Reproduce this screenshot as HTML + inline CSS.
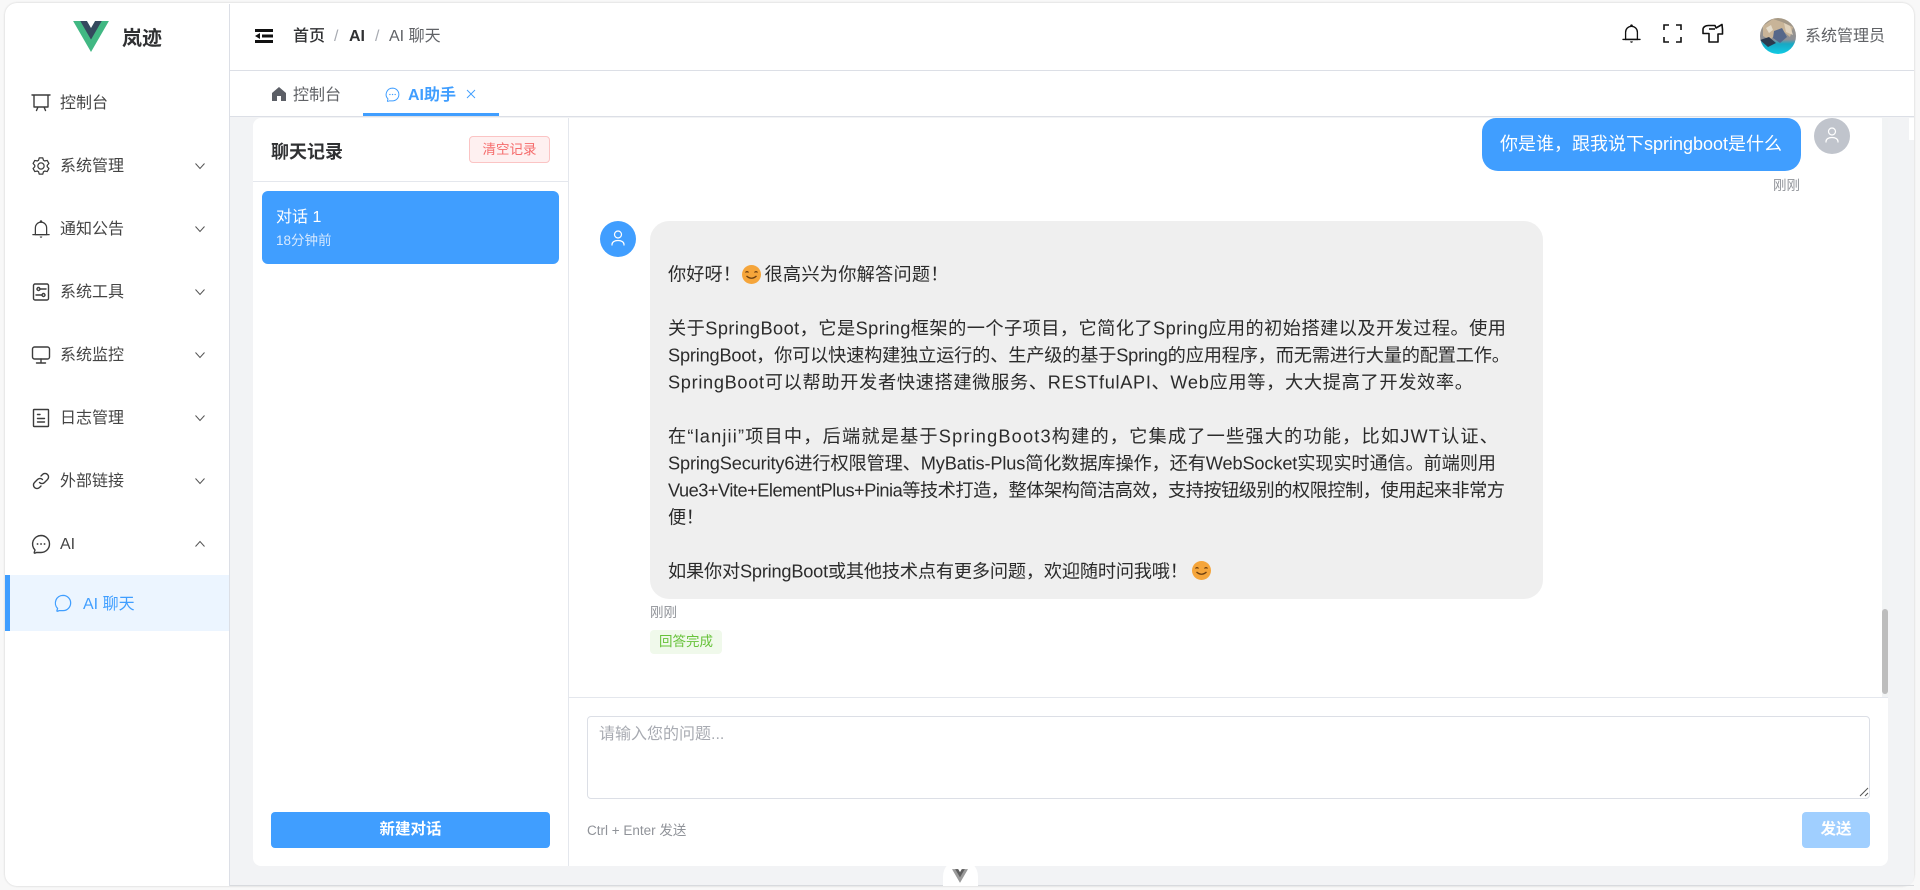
<!DOCTYPE html>
<html lang="zh-CN">
<head>
<meta charset="utf-8">
<title>AI 聊天</title>
<style>
*{box-sizing:border-box;margin:0;padding:0}
html,body{width:1920px;height:890px;overflow:hidden;background:#f8f8f8;font-family:"Liberation Sans","Noto Sans CJK SC",sans-serif;color:#303133}
#w{position:absolute;left:0;top:0;width:1920px;height:890px;filter:blur(.35px)}
.a{position:absolute}
.t{position:absolute;white-space:nowrap;line-height:20px;height:20px;margin-top:-10px}
svg{position:absolute;display:block;overflow:visible}
.m{font-size:16px;left:60px;color:#444}
.ic{width:20px;height:20px;left:31px;fill:none;stroke:#3c3c3c;stroke-width:1.4;stroke-linecap:round;stroke-linejoin:round}
.ch{width:12px;height:12px;left:194px;fill:none;stroke:#555;stroke-width:1}
</style>
</head>
<body>
<div id="w">
<div class="a" style="left:5px;top:3px;width:1909px;height:883px;background:#fff;border-radius:12px;box-shadow:0 0 2px rgba(0,0,0,.18);overflow:hidden"></div>

<!-- content background -->
<div class="a" style="left:230px;top:116px;width:1684px;height:770px;background:#f2f3f5;border-radius:0 0 10px 0"></div>
<div class="a" style="left:1909px;top:118px;width:5px;height:22px;background:#fff"></div>

<!-- sidebar -->
<div class="a" style="left:229px;top:4px;width:1px;height:882px;background:#dcdfe6"></div>
<svg style="left:73px;top:21px;width:36px;height:31px" viewBox="0 0 261.76 226.69"><path fill="#41b883" d="M161.096.001l-30.225 52.351L100.647.001H-.005l130.877 226.688L261.749.001z"/><path fill="#34495e" d="M161.096.001l-30.225 52.351L100.647.001H52.346l78.526 136.01L209.398.001z"/></svg>
<div class="t" style="left:122px;top:39px;font-size:20px;font-weight:700;color:#303133">岚迹</div>

<svg class="ic" style="top:92px" viewBox="0 0 20 20"><path d="M1 3h18M3 3v12h14V3M7 15l-1.500 3.500M13 15l1.500 3.500"/></svg>
<div class="t m" style="top:104px">控制台</div>

<svg class="ic" style="top:156px;stroke:none;fill:#3c3c3c" viewBox="0 0 1024 1024"><path d="M600.704 64a32 32 0 0 1 30.464 22.208l35.2 109.376c14.784 7.232 28.928 15.36 42.432 24.512l112.384-24.192a32 32 0 0 1 34.432 15.36L944.32 364.8a32 32 0 0 1-4.032 37.504l-77.12 85.12a357.12 357.12 0 0 1 0 49.024l77.12 85.248a32 32 0 0 1 4.032 37.504l-88.704 153.6a32 32 0 0 1-34.432 15.296L708.8 803.904c-13.44 9.088-27.648 17.28-42.368 24.512l-35.264 109.376A32 32 0 0 1 600.704 960H423.296a32 32 0 0 1-30.464-22.208L357.696 828.48a351.616 351.616 0 0 1-42.56-24.64l-112.32 24.256a32 32 0 0 1-34.432-15.36L79.68 659.2a32 32 0 0 1 4.032-37.504l77.12-85.248a357.12 357.12 0 0 1 0-48.896l-77.12-85.248A32 32 0 0 1 79.68 364.8l88.704-153.6a32 32 0 0 1 34.432-15.296l112.32 24.256c13.568-9.152 27.776-17.408 42.56-24.64l35.2-109.312A32 32 0 0 1 423.232 64H600.64zm-23.424 64H446.72l-36.352 113.088-24.512 11.968a294.113 294.113 0 0 0-34.816 20.096l-22.656 15.36-116.224-25.088-65.28 113.152 79.68 88.192-1.92 27.136a293.12 293.12 0 0 0 0 40.192l1.92 27.136-79.808 88.192 65.344 113.152 116.224-25.024 22.656 15.296a294.113 294.113 0 0 0 34.816 20.096l24.512 11.968L446.72 896h130.688l36.48-113.152 24.448-11.904a288.282 288.282 0 0 0 34.752-20.096l22.592-15.296 116.288 25.024 65.28-113.152-79.744-88.192 1.92-27.136a293.12 293.12 0 0 0 0-40.256l-1.92-27.136 79.808-88.128-65.344-113.152-116.288 24.96-22.592-15.232a287.616 287.616 0 0 0-34.752-20.096l-24.448-11.904L577.344 128zM512 320a192 192 0 1 1 0 384 192 192 0 0 1 0-384zm0 64a128 128 0 1 0 0 256 128 128 0 0 0 0-256z"/></svg>
<div class="t m" style="top:167px">系统管理</div>
<svg class="ch" style="top:160px" viewBox="0 0 12 12"><path d="M1.500 3.500l4.500 5 4.500-5"/></svg>

<svg class="ic" style="top:219px;stroke:none;fill:#3c3c3c" viewBox="0 0 1024 1024"><path d="M512 64a64 64 0 0 1 64 64v64H448v-64a64 64 0 0 1 64-64z"/><path d="M256 768h512V448a256 256 0 1 0-512 0v320zm256-640a320 320 0 0 1 320 320v384H192V448a320 320 0 0 1 320-320z"/><path d="M96 768h832q32 0 32 32t-32 32H96q-32 0-32-32t32-32zm352 128h128a64 64 0 0 1-128 0z"/></svg>
<div class="t m" style="top:230px">通知公告</div>
<svg class="ch" style="top:223px" viewBox="0 0 12 12"><path d="M1.500 3.500l4.500 5 4.500-5"/></svg>

<svg class="ic" style="top:282px" viewBox="0 0 20 20"><rect x="2.500" y="2" width="15" height="16" rx="1.500"/><circle cx="7.500" cy="7" r="1.500"/><path d="M9 7h6M5 13h6"/><circle cx="12.500" cy="13" r="1.500"/></svg>
<div class="t m" style="top:293px">系统工具</div>
<svg class="ch" style="top:286px" viewBox="0 0 12 12"><path d="M1.500 3.500l4.500 5 4.500-5"/></svg>

<svg class="ic" style="top:345px" viewBox="0 0 20 20"><rect x="1.500" y="2" width="17" height="12" rx="2"/><path d="M10 14v4M5.500 18h9"/></svg>
<div class="t m" style="top:356px">系统监控</div>
<svg class="ch" style="top:349px" viewBox="0 0 12 12"><path d="M1.500 3.500l4.500 5 4.500-5"/></svg>

<svg class="ic" style="top:408px" viewBox="0 0 20 20"><rect x="2.500" y="1.500" width="15" height="17" rx=".5"/><path d="M6.500 6.500h2.500M6.500 10.500h7M6.500 14h7"/></svg>
<div class="t m" style="top:419px">日志管理</div>
<svg class="ch" style="top:412px" viewBox="0 0 12 12"><path d="M1.500 3.500l4.500 5 4.500-5"/></svg>

<svg class="ic" style="top:471px" viewBox="0 0 20 20"><path d="M8.500 11.500a3.500 3.500 0 0 0 5 0l3-3a3.500 3.500 0 0 0-5-5L10 5"/><path d="M11.500 8.500a3.500 3.500 0 0 0-5 0l-3 3a3.500 3.500 0 0 0 5 5L10 15"/></svg>
<div class="t m" style="top:482px">外部链接</div>
<svg class="ch" style="top:475px" viewBox="0 0 12 12"><path d="M1.500 3.500l4.500 5 4.500-5"/></svg>

<svg class="ic" style="top:534px" viewBox="0 0 20 20"><path d="M10 1.500a8.500 8.500 0 0 1 0 17H5.500c-1.800 1-2.500.8-2.200-.2l.7-2.300A8.500 8.500 0 0 1 10 1.500z"/><path d="M6.500 10h.1M10 10h.1M13.500 10h.1" stroke-width="1.800"/></svg>
<div class="t m" style="top:545px">AI</div>
<svg class="ch" style="top:538px" viewBox="0 0 12 12"><path d="M1.500 8.500l4.500-5 4.500 5"/></svg>

<div class="a" style="left:5px;top:575px;width:224px;height:56px;background:#ecf5ff"></div>
<div class="a" style="left:5px;top:575px;width:5px;height:56px;background:#409eff"></div>
<svg style="left:54px;top:594px;width:18px;height:18px;fill:none;stroke:#409eff;stroke-width:1.400;stroke-linejoin:round" viewBox="0 0 20 20"><path d="M10 1.500a8.500 8.500 0 0 1 0 17H5.500c-1.800 1-2.500.8-2.200-.2l.7-2.300A8.500 8.500 0 0 1 10 1.500z"/></svg>
<div class="t" style="left:83px;top:604.500px;font-size:16px;color:#409eff">AI 聊天</div>

<!-- header -->
<div class="a" style="left:230px;top:70px;width:1684px;height:1px;background:#dcdfe6"></div>
<div class="a" style="left:230px;top:116px;width:1684px;height:1px;background:#dcdfe6"></div>
<svg style="left:255px;top:29px;width:18px;height:14px" viewBox="0 0 18 14"><path d="M0 0h18v3H0zM0 11h18v3H0zM7 5.500h11v3H7z" fill="#111"/><path d="M0 7l5-3v6z" fill="#111"/></svg>
<div class="t" style="left:293px;top:37px;font-size:16px;font-weight:500;color:#303133">首页</div>
<div class="t" style="left:334px;top:37px;font-size:16px;color:#a8abb2">/</div>
<div class="t" style="left:349px;top:37px;font-size:16px;font-weight:700;color:#303133">AI</div>
<div class="t" style="left:375px;top:37px;font-size:16px;color:#a8abb2">/</div>
<div class="t" style="left:389px;top:37px;font-size:16px;color:#606266">AI 聊天</div>

<svg style="left:1621px;top:23px;width:21px;height:21px;fill:#111" viewBox="0 0 1024 1024"><path d="M512 64a64 64 0 0 1 64 64v64H448v-64a64 64 0 0 1 64-64z"/><path d="M256 768h512V448a256 256 0 1 0-512 0v320zm256-640a320 320 0 0 1 320 320v384H192V448a320 320 0 0 1 320-320z"/><path d="M96 768h832q32 0 32 32t-32 32H96q-32 0-32-32t32-32zm352 128h128a64 64 0 0 1-128 0z"/></svg>
<svg style="left:1663px;top:24px;width:19px;height:19px;fill:none;stroke:#111;stroke-width:1.600" viewBox="0 0 19 19"><path d="M1 6V1h5M13 1h5v5M18 13v5h-5M6 18H1v-5"/></svg>
<svg style="left:1702px;top:24px;width:21px;height:19px;fill:none;stroke:#111;stroke-width:1.600;stroke-linejoin:round" viewBox="0 0 21 19"><path d="M1 9.500V5.500C1 3 3.500 1.500 6.500 1.500H13l1 2.500 6-3.500.500 5v4.500H16V18H7V9.500z"/><path d="M7 5h6"/></svg>
<svg style="left:1760px;top:18px;width:36px;height:36px" viewBox="0 0 36 36"><defs><clipPath id="av"><circle cx="18" cy="18" r="18"/></clipPath><linearGradient id="g" x1="0" y1="0" x2="0" y2="1"><stop offset="0" stop-color="#a89a84"/><stop offset=".6" stop-color="#8c8f96"/><stop offset=".72" stop-color="#17a8c4"/><stop offset="1" stop-color="#10cbe4"/></linearGradient></defs><g clip-path="url(#av)"><rect width="36" height="36" fill="url(#g)"/><path d="M3 8l10-7 9 3 11 5-3 10-6-5-8 2-6 6-7-4z" fill="#c8b498"/><path d="M14 13l8-3 5 9-7 6-7-5z" fill="#55678a"/><path d="M0 22l9-3 7 6-8 4z" fill="#2c3a4e"/><path d="M24 5l6 3 3 9-7-3z" fill="#e0d2bc"/><path d="M6 10l5-3 2 5-4 3z" fill="#e4dccb"/></g></svg>
<div class="t" style="left:1805px;top:37px;font-size:16px;color:#606266">系统管理员</div>

<!-- tabs -->
<svg style="left:272px;top:87px;width:14px;height:14px;fill:#5c5f66" viewBox="0 0 14 14"><path d="M7 0l7 6v8H9V9H5v5H0V6z"/></svg>
<div class="t" style="left:293px;top:95.500px;font-size:16px;color:#606266">控制台</div>
<svg style="left:385px;top:87px;width:15px;height:15px;fill:none;stroke:#409eff;stroke-width:1.300;stroke-linecap:round;stroke-linejoin:round" viewBox="0 0 20 20"><path d="M10 1.500a8.500 8.500 0 0 1 0 17H5.500c-1.800 1-2.500.8-2.200-.2l.7-2.300A8.500 8.500 0 0 1 10 1.500z"/><path d="M6.500 10h.1M10 10h.1M13.500 10h.1" stroke-width="1.800"/></svg>
<div class="t" style="left:408px;top:95.500px;font-size:16px;font-weight:700;color:#409eff">AI助手</div>
<svg style="left:466px;top:89px;width:10px;height:10px;fill:none;stroke:#409eff;stroke-width:.9" viewBox="0 0 10 10"><path d="M1 1l8 8M9 1l-8 8"/></svg>
<div class="a" style="left:363px;top:113px;width:136px;height:3px;background:#409eff"></div>

<!-- main panel -->
<div class="a" style="left:253px;top:118px;width:1635px;height:748px;background:#fff;border-radius:8px"></div>
<div class="a" style="left:568px;top:118px;width:1px;height:748px;background:#e4e7ed"></div>
<div class="t" style="left:271px;top:152px;font-size:18px;font-weight:700;color:#303133">聊天记录</div>
<div class="a" style="left:469px;top:136px;width:81px;height:27px;background:#fef0f0;border:1px solid #fbc4c4;border-radius:4px;color:#f56c6c;font-size:13.500px;line-height:25px;text-align:center">清空记录</div>
<div class="a" style="left:253px;top:181px;width:315px;height:1px;background:#e4e7ed"></div>
<div class="a" style="left:262px;top:191px;width:297px;height:73px;background:#409eff;border-radius:6px"></div>
<div class="t" style="left:276px;top:218px;font-size:16px;color:#fff">对话 1</div>
<div class="t" style="left:276px;top:241px;font-size:13.500px;color:#d6e9ff">18分钟前</div>
<div class="a" style="left:271px;top:812px;width:279px;height:36px;background:#409eff;border-radius:4px;color:#fff;font-size:15.500px;font-weight:700;line-height:35px;text-align:center">新建对话</div>

<!-- scrollbar -->
<div class="a" style="left:1882px;top:118px;width:6px;height:579px;background:#f1f3f4"></div>
<div class="a" style="left:1882px;top:609px;width:6px;height:85px;background:#bdbdbd;border-radius:3px"></div>

<!-- user message -->
<div class="a" style="left:1482px;top:118px;width:319px;height:53px;background:#409eff;border-radius:14px 14px 16px 16px"></div>
<svg style="left:1500px;top:130px;width:290px;height:30px" viewBox="0 0 290 30"><text x="0" y="20" font-size="18" fill="#fff" textLength="282" lengthAdjust="spacing" font-family="Liberation Sans,Noto Sans CJK SC,sans-serif">你是谁，跟我说下springboot是什么</text></svg>
<div class="t" style="left:1773px;top:186px;font-size:13.500px;color:#909399">刚刚</div>
<div class="a" style="left:1814px;top:118px;width:36px;height:36px;border-radius:50%;background:#c0c4cc"></div>
<svg style="left:1825px;top:127px;width:14px;height:17px;fill:none;stroke:#fff;stroke-width:1.200" viewBox="0 0 14 17"><circle cx="7" cy="4.500" r="3.500"/><path d="M1 15.500v-1c0-2.500 2.500-4 6-4s6 1.500 6 4v1"/></svg>

<!-- assistant message -->
<div class="a" style="left:600px;top:221px;width:36px;height:36px;border-radius:50%;background:#409eff"></div>
<svg style="left:611px;top:230px;width:14px;height:17px;fill:none;stroke:#fff;stroke-width:1.200" viewBox="0 0 14 17"><circle cx="7" cy="4.500" r="3.500"/><path d="M1 15.500v-1c0-2.500 2.500-4 6-4s6 1.500 6 4v1"/></svg>
<div class="a" style="left:650px;top:221px;width:893px;height:378px;background:#efefef;border-radius:19px"></div>
<svg style="left:0;top:0;width:1920px;height:890px;font-family:'Liberation Sans','Noto Sans CJK SC',sans-serif;font-size:18.200px;fill:#2b2b2b" viewBox="0 0 1920 890">
<text x="668" y="280.500" textLength="73" lengthAdjust="spacing">你好呀！</text>
<text x="764.500" y="280.500" textLength="184" lengthAdjust="spacing">很高兴为你解答问题！</text>
<text x="668" y="334.500" textLength="838" lengthAdjust="spacing">关于SpringBoot，它是Spring框架的一个子项目，它简化了Spring应用的初始搭建以及开发过程。使用</text>
<text x="668" y="361.500" textLength="842" lengthAdjust="spacing">SpringBoot，你可以快速构建独立运行的、生产级的基于Spring的应用程序，而无需进行大量的配置工作。</text>
<text x="668" y="388.500" textLength="805" lengthAdjust="spacing">SpringBoot可以帮助开发者快速搭建微服务、RESTfulAPI、Web应用等，大大提高了开发效率。</text>
<text x="668" y="442.500" textLength="830" lengthAdjust="spacing">在“lanjii”项目中，后端就是基于SpringBoot3构建的，它集成了一些强大的功能，比如JWT认证、</text>
<text x="668" y="469.500" textLength="828" lengthAdjust="spacing">SpringSecurity6进行权限管理、MyBatis-Plus简化数据库操作，还有WebSocket实现实时通信。前端则用</text>
<text x="668" y="496.500" textLength="837" lengthAdjust="spacing">Vue3+Vite+ElementPlus+Pinia等技术打造，整体架构简洁高效，支持按钮级别的权限控制，使用起来非常方</text>
<text x="668" y="523.500" textLength="36" lengthAdjust="spacing">便！</text>
<text x="668" y="577.500" textLength="520" lengthAdjust="spacing">如果你对SpringBoot或其他技术点有更多问题，欢迎随时问我哦！</text>
</svg>
<svg style="left:742px;top:265px;width:19px;height:19px" viewBox="0 0 19 19"><circle cx="9.500" cy="9.500" r="9.500" fill="#f5a53a"/><path d="M3.500 7.500q1.500-1.800 3 0M12.500 7.500q1.500-1.800 3 0" fill="none" stroke="#6b3e10" stroke-width="1.200"/><path d="M4.500 11q5 4.500 10 0" fill="none" stroke="#6b3e10" stroke-width="1.300"/></svg>
<svg style="left:1192px;top:561px;width:19px;height:19px" viewBox="0 0 19 19"><circle cx="9.500" cy="9.500" r="9.500" fill="#f5a53a"/><path d="M3.500 7.500q1.500-1.800 3 0M12.500 7.500q1.500-1.800 3 0" fill="none" stroke="#6b3e10" stroke-width="1.200"/><path d="M4.500 11q5 4.500 10 0" fill="none" stroke="#6b3e10" stroke-width="1.300"/></svg>
<div class="t" style="left:650px;top:613px;font-size:13.500px;color:#909399">刚刚</div>
<div class="a" style="left:650px;top:630px;width:72px;height:24px;background:#f0f9eb;border-radius:4px;color:#67c23a;font-size:13.500px;line-height:24px;text-align:center">回答完成</div>

<!-- input -->
<div class="a" style="left:569px;top:697px;width:1319px;height:1px;background:#e4e7ed"></div>
<div class="a" style="left:587px;top:716px;width:1283px;height:83px;border:1px solid #dcdfe6;border-radius:4px;background:#fff"></div>
<div class="t" style="left:599px;top:735px;font-size:16px;color:#a8abb2">请输入您的问题...</div>
<svg style="left:1859px;top:787px;width:10px;height:10px;fill:none;stroke:#555;stroke-width:1" viewBox="0 0 10 10"><path d="M1 9l8-8M6 9l3-3"/></svg>
<div class="t" style="left:587px;top:831px;font-size:13.500px;color:#909399">Ctrl + Enter 发送</div>
<div class="a" style="left:1802px;top:812px;width:68px;height:36px;background:#a0cfff;border-radius:4px;color:#fff;font-size:15.500px;font-weight:700;line-height:35px;text-align:center">发送</div>

<!-- bottom handle -->
<div class="a" style="left:230px;top:885px;width:1684px;height:1px;background:#d8dade"></div>
<div class="a" style="left:943px;top:859px;width:35px;height:27px;background:#fff;border-radius:17.500px 17.500px 0 0"></div>
<svg style="left:952px;top:869px;width:16px;height:14px" viewBox="0 0 261.76 226.69"><path fill="#9a9a9a" d="M161.096.001l-30.225 52.351L100.647.001H-.005l130.877 226.688L261.749.001z"/><path fill="#5e5e5e" d="M161.096.001l-30.225 52.351L100.647.001H52.346l78.526 136.01L209.398.001z"/></svg>
</div>
</body>
</html>
